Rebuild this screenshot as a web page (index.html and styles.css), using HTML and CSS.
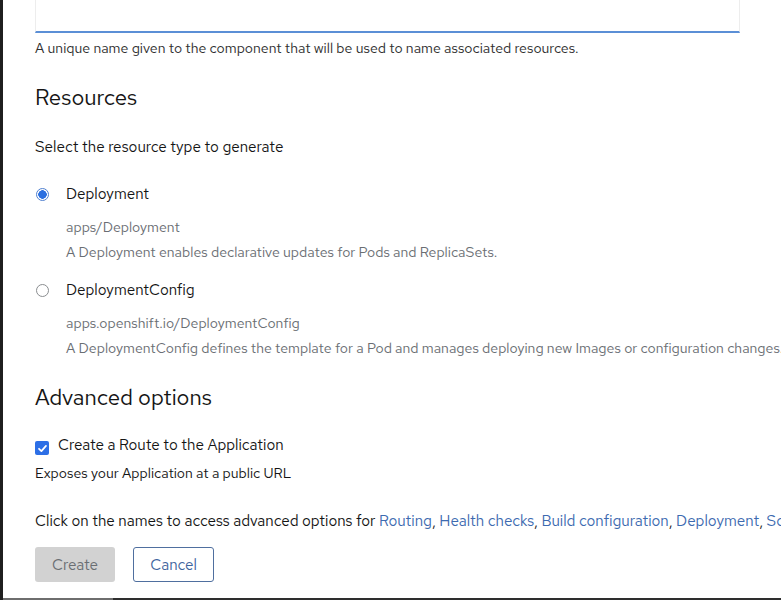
FILE: index.html
```html
<!DOCTYPE html>
<html>
<head>
<meta charset="utf-8">
<link rel="stylesheet" href="styles.css">
</head>
<body>
<div class="frame">
  <div class="page">
    <div class="input-wrap"><div class="input"></div></div>
    <p class="helper">A unique name given to the component that will be used to name associated resources.</p>

    <h2 class="section-title">Resources</h2>
    <p class="lead">Select the resource type to generate</p>

    <div class="radio-group">
      <div class="radio">
        <div class="radio-row">
          <span class="radio-dot checked"></span>
          <span class="radio-label">Deployment</span>
        </div>
        <div class="radio-body">
          <div class="api">apps/Deployment</div>
          <div class="desc">A Deployment enables declarative updates for Pods and ReplicaSets.</div>
        </div>
      </div>
      <div class="radio">
        <div class="radio-row">
          <span class="radio-dot"></span>
          <span class="radio-label">DeploymentConfig</span>
        </div>
        <div class="radio-body">
          <div class="api">apps.openshift.io/DeploymentConfig</div>
          <div class="desc">A DeploymentConfig defines the template for a Pod and manages deploying new Images or configuration changes.</div>
        </div>
      </div>
    </div>

    <h2 class="section-title adv">Advanced options</h2>
    <div class="check-row">
      <span class="checkbox"><svg viewBox="0 0 12 12" width="11" height="11"><path d="M2.2 6.3 L4.8 8.8 L9.8 3.2" fill="none" stroke="#fff" stroke-width="1.9" stroke-linecap="round" stroke-linejoin="round"/></svg></span>
      <span class="check-label">Create a Route to the Application</span>
    </div>
    <p class="check-desc">Exposes your Application at a public URL</p>

    <p class="links">Click on the names to access advanced options for <a>Routing</a>, <a>Health checks</a>, <a>Build configuration</a>, <a>Deployment</a>, <a>Scaling</a>, <a>Resource limits</a> and <a>Labels</a>.</p>

    <div class="actions">
      <button class="btn primary">Create</button>
      <button class="btn secondary">Cancel</button>
    </div>
  </div>
  <div class="bottom-bar"></div>
</div>
</body>
</html>
```
FILE: styles.css
```css
html, body {
  margin: 0;
  padding: 0;
  width: 781px;
  height: 600px;
  overflow: hidden;
  background: #fff;
}
.frame {
  width: 781px;
  height: 600px;
  box-sizing: border-box;
  border-left: 3px solid #1f1f1f;
  overflow: hidden;
  position: relative;
  font-family: "Red Hat Text", "Open Sans", "Liberation Sans", sans-serif;
  color: #151515;
  font-size: 14px;
}
.bottom-bar {
  position: absolute;
  left: 0;
  right: 0;
  bottom: 0;
  height: 2px;
  background: linear-gradient(to right, #6e6e6e 0 110px, #2e2e2e 110px);
}
.page {
  padding-left: 32px;
  width: 1000px;
}
.input-wrap {
  margin-top: -20px;
  width: 705px;
}
.input {
  height: 50px;
  border: 1px solid #ededed;
  border-bottom: 2px solid #5b8fd6;
}
.helper {
  margin: 5px 0 0;
  font-size: 14.1px;
  line-height: 20px;
  color: #2e2e2e;
}
.section-title {
  margin: 25px 0 0;
  font-size: 22.2px;
  line-height: 28px;
  font-weight: 400;
  color: #151515;
}
.lead {
  margin: 25px 0 0;
  font-size: 15.2px;
  line-height: 22px;
}
.radio-group {
  margin-top: 25px;
}
.radio-row {
  display: flex;
  align-items: center;
  height: 22px;
}
.radio-dot {
  width: 11px;
  height: 11px;
  border: 1px solid #8a8d90;
  border-radius: 50%;
  margin-left: 1px;
  box-sizing: content-box;
}
.radio-dot.checked {
  border-color: #4f7fcf;
  background: radial-gradient(circle, #2b6fe0 0 4px, #fff 4.5px);
}
.radio-label {
  margin-left: 17px;
  font-size: 15.2px;
}
.radio-body {
  padding-left: 31px;
  margin-top: 11px;
  font-size: 14.1px;
  color: #6a6e73;
}
.api {
  line-height: 22px;
}
.desc {
  margin-top: 3px;
  line-height: 22px;
  white-space: nowrap;
}
.radio + .radio {
  margin-top: 16px;
}
.section-title.adv {
  margin-top: 24px;
}
.check-row {
  display: flex;
  align-items: center;
  height: 22px;
  margin-top: 23px;
}
.checkbox {
  width: 14px;
  height: 14px;
  background: #2d6fe6;
  border-radius: 2px;
  display: flex;
  align-items: center;
  justify-content: center;
  margin-top: 6px;
}
.check-label {
  margin-left: 9px;
  font-size: 15.2px;
}
.check-desc {
  margin: 6px 0 0;
  font-size: 14.1px;
  line-height: 22px;
}
.links {
  margin: 26px 0 0;
  font-size: 15.2px;
  line-height: 22px;
  white-space: nowrap;
}
.links a {
  color: #3d6ab0;
}
.actions {
  display: flex;
  gap: 18px;
  margin-top: 15px;
}
.btn {
  height: 35px;
  font-family: inherit;
  font-size: 15.2px;
  border-radius: 3px;
  padding: 0 10px;
}
.btn.primary {
  width: 80px;
  background: #d2d2d2;
  color: #6a6e73;
  border: none;
}
.btn.secondary {
  width: 81px;
  background: #fff;
  color: #3f659e;
  border: 1px solid #4f6f9f;
}
```
